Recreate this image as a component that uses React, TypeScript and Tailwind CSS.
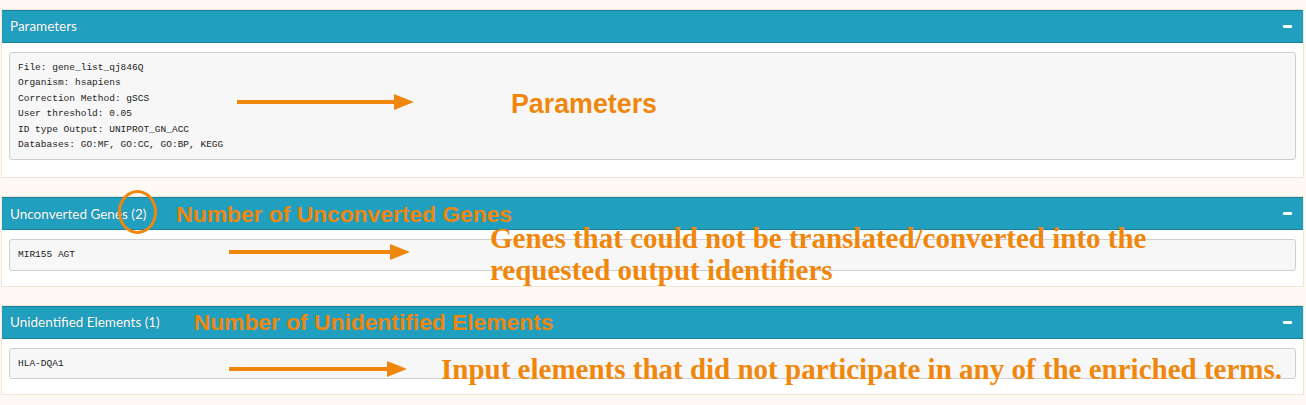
import type { ReactNode } from "react";

const orange = "text-[#f0870c]";
const sansNote = "font-['Liberation_Sans',Arial,sans-serif] font-bold leading-none";
const serifNote = "font-['Liberation_Serif','Times_New_Roman',serif] text-[29px] font-bold leading-[32px]";

function Arrow({ width, className = "" }: { width: number; className?: string }) {
  return (
    <svg width={width} height="18" viewBox={`0 0 ${width} 18`} className={`block shrink-0 ${className}`}>
      <rect x="0" y="7" width={width - 18} height="4" fill="#f0870c" />
      <polygon points={`${width - 20},1 ${width},9 ${width - 20},17`} fill="#f0870c" />
    </svg>
  );
}

function Panel({
  title,
  lines,
  headerNote,
  bodyNote,
  compact = false,
}: {
  title: ReactNode;
  lines: string[];
  headerNote?: ReactNode;
  bodyNote?: ReactNode;
  compact?: boolean;
}) {
  return (
    <div className="mb-[18px] border border-[#f1e6d6] bg-white">
      <div className="flex h-[33px] items-center border-y border-[#1a819c] bg-[#219fbf] pl-2 pr-[11px]">
        <span className="font-['Lato',sans-serif] text-[13.5px] text-white [text-shadow:0_0_1px_rgba(0,0,0,0.3)]">{title}</span>
        {headerNote}
        <span className="ml-auto block h-[3px] w-[9px] rounded-[1px] bg-white" />
      </div>
      <div className={`relative px-[7px] pt-[9px] ${compact ? "pb-[15px]" : "pb-[17px]"}`}>
        <pre className="rounded-[3px] border border-[#cfcfcf] bg-[#f7f7f7] px-2 py-[7px] font-['Liberation_Mono',monospace] text-[9.5px] leading-[15.4px] text-[#222]">
          {lines.join("\n")}
        </pre>
        {bodyNote}
      </div>
    </div>
  );
}

export default function App() {
  return (
    <div className="h-[405px] w-[1306px] overflow-hidden bg-[#fefaf3] pt-[9px] pl-[1px] pr-[2px]">
      <Panel
        title="Parameters"
        lines={[
          "File: gene_list_qj846Q",
          "Organism: hsapiens",
          "Correction Method: gSCS",
          "User threshold: 0.05",
          "ID type Output: UNIPROT_GN_ACC",
          "Databases: GO:MF, GO:CC, GO:BP, KEGG",
        ]}
        bodyNote={
          <div className="absolute left-[235px] top-[46px] flex items-center gap-[97px]">
            <Arrow width={177} />
            <span className={`${sansNote} text-[26.8px] ${orange} translate-y-[2px]`}>Parameters</span>
          </div>
        }
      />
      <Panel
        compact
        title={
          <span className="relative">
            Unconverted Genes (2)
            <span className="absolute -right-[11px] -top-[16px] h-[44px] w-[39px] rounded-[50%] border-[3px] border-[#f0870c]" />
          </span>
        }
        lines={["MIR155 AGT"]}
        headerNote={<span className={`ml-[30px] ${sansNote} text-[22.8px] ${orange}`}>Number of Unconverted Genes</span>}
        bodyNote={
          <div className="absolute left-[227px] top-[-6px] flex items-start gap-[80px]">
            <Arrow width={181} className="mt-[19px]" />
            <span className={`${serifNote} ${orange} -translate-y-[2px]`}>
              Genes that could not be translated/converted into the
              <br />
              requested output identifiers
            </span>
          </div>
        }
      />
      <Panel
        compact
        title="Unidentified Elements (1)"
        lines={["HLA-DQA1"]}
        headerNote={<span className={`ml-[34px] ${sansNote} text-[22.8px] ${orange}`}>Number of Unidentified Elements</span>}
        bodyNote={
          <div className="absolute left-[227px] top-[14px] flex items-center gap-[34px]">
            <Arrow width={178} />
            <span className={`${serifNote} ${orange}`}>Input elements that did not participate in any of the enriched terms.</span>
          </div>
        }
      />
    </div>
  );
}
